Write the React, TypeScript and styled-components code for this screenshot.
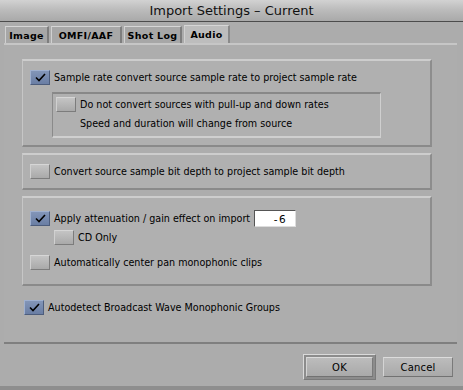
import styled, { createGlobalStyle } from "styled-components";

const GlobalStyle = createGlobalStyle`
  html, body {
    margin: 0;
    padding: 0;
    background: #acacac;
  }
  body {
    font-family: "DejaVu Sans", "Liberation Sans", sans-serif;
    color: #000;
  }
`;

const Window = styled.div`
  width: 463px;
  height: 390px;
  background: #acacac;
  display: flex;
  flex-direction: column;
  box-sizing: border-box;
  border-bottom: 4px solid #8e8e8e;
  overflow: hidden;
`;

const TitleBar = styled.div`
  height: 21px;
  border-bottom: 1px solid #4c4c4c;
  background: linear-gradient(#d2d2d2, #bcbcbc 45%, #a9a9a9);
  display: flex;
  align-items: center;
  justify-content: center;
  font-family: "DejaVu Sans", sans-serif;
  font-size: 13px;
  color: #111;
`;

const TabRow = styled.div`
  height: 21px;
  display: flex;
  align-items: flex-end;
  padding-left: 5px;
  gap: 2px;
`;

const Tab = styled.div<{ $active?: boolean; $width: number }>`
  width: ${(p) => p.$width}px;
  height: ${(p) => (p.$active ? 18 : 17)}px;
  box-sizing: border-box;
  display: flex;
  align-items: center;
  justify-content: center;
  font-family: "DejaVu Sans", sans-serif;
  font-weight: bold;
  font-size: 9.5px;
  letter-spacing: 0.3px;
  background: ${(p) => (p.$active ? "#bdbdbd" : "#a7a7a7")};
  border-top: 1px solid #d6d6d6;
  border-left: 1px solid #d0d0d0;
  border-right: 2px solid ${(p) => (p.$active ? "#8a8a8a" : "#7e7e7e")};
`;

const Panel = styled.div`
  height: 301px;
  margin: 0 6px 0 4px;
  box-sizing: border-box;
  background: #adadad;
  border-top: 2px solid #c6c6c6;
  border-bottom: 2px solid #7f7f7f;
  padding: 14px 0 0 18px;
  display: flex;
  flex-direction: column;
  gap: 6px;
`;

const Group = styled.div<{ $height: number }>`
  width: 410px;
  height: ${(p) => p.$height}px;
  box-sizing: border-box;
  background: #b0b0b0;
  border-top: 2px solid #cdcdcd;
  border-left: 1px solid #c6c6c6;
  border-right: 2px solid #8d8d8d;
  border-bottom: 2px solid #8a8a8a;
  padding: 9px 0 0 7px;
  display: flex;
  flex-direction: column;
`;

const InsetGroup = styled.div`
  width: 329px;
  height: 46px;
  margin: 7px 0 0 22px;
  box-sizing: border-box;
  border-top: 2px solid #888;
  border-left: 1px solid #8a8a8a;
  border-bottom: 2px solid #cfcfcf;
  border-right: 1px solid #cfcfcf;
  padding: 3px 0 0 3px;
  display: flex;
  flex-direction: column;
  gap: 4px;
`;

const Row = styled.div<{ $indent?: number; $top?: number }>`
  display: flex;
  align-items: center;
  gap: 4px;
  height: 15px;
  margin-left: ${(p) => p.$indent ?? 0}px;
  margin-top: ${(p) => p.$top ?? 0}px;
  font-size: 9.6px;
  white-space: nowrap;
`;

const Note = styled.div`
  height: 14px;
  display: flex;
  align-items: center;
  padding-left: 24px;
  font-size: 9.6px;
  white-space: nowrap;
`;

const Box = styled.div<{ $checked?: boolean }>`
  width: 20px;
  height: 15px;
  box-sizing: border-box;
  flex: none;
  display: flex;
  align-items: center;
  justify-content: center;
  background: ${(p) =>
    p.$checked
      ? "linear-gradient(#8295b8, #6a7ea4)"
      : "linear-gradient(#c4c4c4, #a9a9a9)"};
  border-top: 1px solid ${(p) => (p.$checked ? "#9fb0cf" : "#d6d6d6")};
  border-left: 1px solid ${(p) => (p.$checked ? "#9fb0cf" : "#d0d0d0")};
  border-right: 1px solid ${(p) => (p.$checked ? "#4d5d7c" : "#7c7c7c")};
  border-bottom: 1px solid ${(p) => (p.$checked ? "#4d5d7c" : "#7c7c7c")};
`;

const Check = () => (
  <svg width="11" height="9" viewBox="0 0 11 9">
    <path d="M1 4.5 L4 7.5 L10 1" fill="none" stroke="#000" strokeWidth="1.6" />
  </svg>
);

const Checkbox = ({ checked }: { checked?: boolean }) => (
  <Box $checked={checked}>{checked && <Check />}</Box>
);

const GainInput = styled.div`
  width: 42px;
  height: 17px;
  box-sizing: border-box;
  background: #fff;
  border-top: 1px solid #555;
  border-left: 1px solid #555;
  border-bottom: 1px solid #ddd;
  border-right: 1px solid #ddd;
  display: flex;
  align-items: center;
  justify-content: flex-end;
  padding-right: 8px;
  font-size: 10.5px;
  letter-spacing: 1.5px;
`;

const LooseRow = styled(Row)`
  margin-top: 8px;
  margin-left: 2px;
`;

const Footer = styled.div`
  flex: 1;
  display: flex;
  align-items: center;
  justify-content: flex-end;
  padding: 4px 10px 0 0;
  gap: 7px;
`;

const DefaultRing = styled.div`
  padding: 2px;
  border: 1px solid #dadada;
  border-right-color: #7a7a7a;
  border-bottom-color: #7a7a7a;
  background: #8c8c8c;
`;

const Button = styled.div<{ $width: number }>`
  width: ${(p) => p.$width}px;
  height: 20px;
  box-sizing: border-box;
  display: flex;
  align-items: center;
  justify-content: center;
  background: linear-gradient(#bcbcbc, #a9a9a9);
  border-top: 1px solid #dcdcdc;
  border-left: 1px solid #d4d4d4;
  border-right: 1px solid #7a7a7a;
  border-bottom: 1px solid #727272;
  font-size: 10px;
  letter-spacing: 0.2px;
`;

export default function App() {
  return (
    <>
      <GlobalStyle />
      <Window>
        <TitleBar>Import Settings – Current</TitleBar>
        <TabRow>
          <Tab $width={44}>Image</Tab>
          <Tab $width={71}>OMFI/AAF</Tab>
          <Tab $width={58}>Shot Log</Tab>
          <Tab $width={46} $active>
            Audio
          </Tab>
        </TabRow>
        <Panel>
          <Group $height={88}>
            <Row>
              <Checkbox checked />
              Sample rate convert source sample rate to project sample rate
            </Row>
            <InsetGroup>
              <Row>
                <Checkbox />
                Do not convert sources with pull-up and down rates
              </Row>
              <Note>Speed and duration will change from source</Note>
            </InsetGroup>
          </Group>
          <Group $height={37}>
            <Row>
              <Checkbox />
              Convert source sample bit depth to project sample bit depth
            </Row>
          </Group>
          <Group $height={90}>
            <Row $top={4}>
              <Checkbox checked />
              Apply attenuation / gain effect on import
              <GainInput>-6</GainInput>
            </Row>
            <Row $indent={24} $top={4}>
              <Checkbox />
              CD Only
            </Row>
            <Row $top={10}>
              <Checkbox />
              Automatically center pan monophonic clips
            </Row>
          </Group>
          <LooseRow>
            <Checkbox checked />
            Autodetect Broadcast Wave Monophonic Groups
          </LooseRow>
        </Panel>
        <Footer>
          <DefaultRing>
            <Button $width={67}>OK</Button>
          </DefaultRing>
          <Button $width={70}>Cancel</Button>
        </Footer>
      </Window>
    </>
  );
}
